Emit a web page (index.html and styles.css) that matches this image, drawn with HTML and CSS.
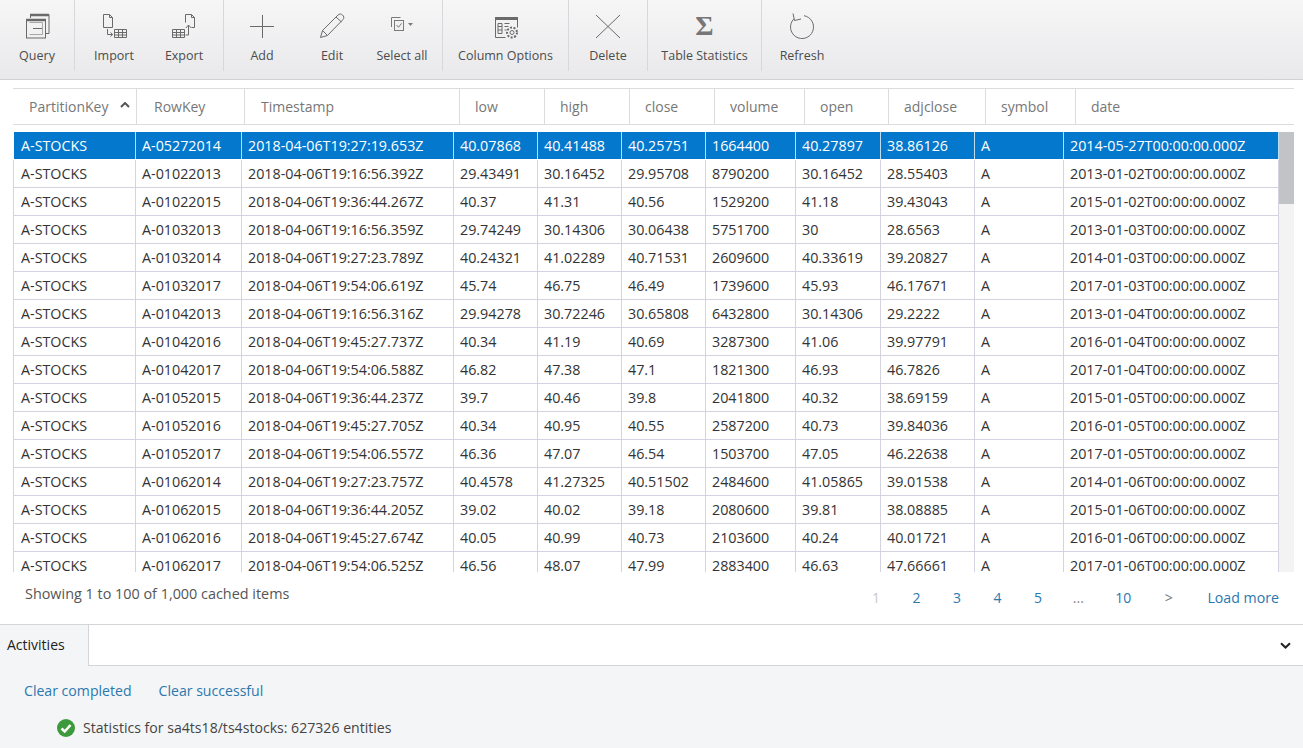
FILE: index.html
```html
<!DOCTYPE html>
<html>
<head>
<title>Table Explorer</title>
<link rel="stylesheet" href="styles.css">
</head>
<body>

<div class="toolbar">
  <div class="tool-group group-query">
    <button class="tool">
      <svg width="32" height="32" viewBox="0 0 32 32" fill="none" stroke="#6a6a6a"><path d="M9.500 8V4.500h18.500v19h-3.500"/><path d="M9 5h19" stroke-width="2.500"/><rect x="5.500" y="9.500" width="19" height="18.500"/><path d="M5 10h20" stroke-width="2.500"/><path d="M8.500 12.500h13v12h-13" stroke="#a8a8a8"/><path d="M12 18.500h9"/></svg>
      <span>Query</span>
    </button>
  </div>
  <div class="tool-group group-data">
    <button class="tool">
      <svg width="32" height="32" viewBox="0 0 32 32" fill="none" stroke="#6a6a6a"><path d="M5.500 4.500h6l3 3v10h-9z"/><path d="M11.500 4.500v3h3"/><path d="M9.500 19v5.500h5M12.500 22.500l2.200 2-2.200 2"/><path d="M16.500 19.500h12v8h-12zM16.500 22.500h12M20.500 19.500v8M24.500 19.500v8M16.500 25h12"/></svg>
      <span>Import</span>
    </button>
    <button class="tool">
      <svg width="32" height="32" viewBox="0 0 32 32" fill="none" stroke="#6a6a6a"><path d="M17.500 4.500h6l3 3v10h-3"/><path d="M17.500 4.500v8M23.500 4.500v3h3"/><path d="M20.500 25v-10M17.800 18l2.700-3 2.700 3M20.500 25h-3"/><path d="M4.500 19.500h12v8h-12zM4.500 22.500h12M8.500 19.500v8M12.500 19.500v8M4.500 25h12"/></svg>
      <span>Export</span>
    </button>
  </div>
  <div class="tool-group group-rows">
    <button class="tool">
      <svg width="32" height="32" viewBox="0 0 32 32" fill="none" stroke="#6a6a6a"><path d="M16.500 5v23M4 16.500h24"/></svg>
      <span>Add</span>
    </button>
    <button class="tool">
      <svg width="32" height="32" viewBox="0 0 32 32" fill="none" stroke="#6a6a6a"><path d="M4.500 27.500l2-7L22 5c1.500-1.300 3-1.300 4.500 0s1.800 3 .5 4.500L11.500 25.500zM6.500 20.500l5 5M20 7l5.500 5"/></svg>
      <span>Edit</span>
    </button>
    <button class="tool">
      <svg width="32" height="32" viewBox="0 0 32 32" fill="none" stroke="#7a7a7a"><path d="M5.500 17V7.500h9M8.500 19v-8"/><rect x="8.500" y="10.500" width="9" height="10"/><path d="m10.500 15 2 2.300 3-4"/><path d="M22 13h5l-2.500 3z" fill="#7a7a7a" stroke="none"/></svg>
      <span>Select all</span>
    </button>
  </div>
  <div class="tool-group group-columns">
    <button class="tool">
      <svg width="32" height="32" viewBox="0 0 32 32" fill="none" stroke="#6a6a6a"><path d="M5.500 7.500h22v10M5.500 7.500v20h10"/><path d="M5 8.500h23" stroke-width="3"/><path d="M8 13.500h4v10H8zM8 16.500h4M8 20h4M14.500 13.500h5M14.500 16.500h4M14.500 20h2"/><circle cx="22" cy="22.500" r="2"/><circle cx="22" cy="22.500" r="5" stroke-width="2" stroke-dasharray="2 1.500"/></svg>
      <span>Column Options</span>
    </button>
  </div>
  <div class="tool-group group-delete">
    <button class="tool">
      <svg width="32" height="32" viewBox="0 0 32 32" fill="none" stroke="#6a6a6a"><path d="m4 5 24 23M28 5 4 28"/></svg>
      <span>Delete</span>
    </button>
  </div>
  <div class="tool-group group-stats">
    <button class="tool">
      <span class="sigma">Σ</span>
      <span>Table Statistics</span>
    </button>
  </div>
  <div class="tool-group group-refresh">
    <button class="tool">
      <svg width="32" height="32" viewBox="0 0 32 32" fill="none" stroke="#6a6a6a"><path d="M18 5.700A11.500 11.500 0 1 1 7.800 9"/><path d="M7 3.500l1.500 7 6.500-1.500"/></svg>
      <span>Refresh</span>
    </button>
  </div>
</div>

<div class="grid-wrap">
  <div class="grid-head">
    <div class="hcell hcell-partition">PartitionKey <svg class="sort-arrow" width="10" height="6" viewBox="0 0 10 6" fill="none" stroke="#555" stroke-width="2"><path d="m1 5 4-4 4 4"/></svg></div>
    <div class="hcell hcell-rowkey">RowKey</div>
    <div class="hcell hcell-timestamp">Timestamp</div>
    <div class="hcell hcell-low">low</div>
    <div class="hcell hcell-high">high</div>
    <div class="hcell hcell-close">close</div>
    <div class="hcell hcell-volume">volume</div>
    <div class="hcell hcell-open">open</div>
    <div class="hcell hcell-adjclose">adjclose</div>
    <div class="hcell hcell-symbol">symbol</div>
    <div class="hcell hcell-date">date</div>
  </div>

  <div class="grid-body">
    <table class="grid">
      <colgroup>
        <col class="c1"><col class="c2"><col class="c3"><col class="c4"><col class="c5"><col class="c6"><col class="c7"><col class="c8"><col class="c9"><col class="c10"><col class="c11">
      </colgroup>
      <tbody>
        <tr class="selected"><td>A-STOCKS</td><td>A-05272014</td><td>2018-04-06T19:27:19.653Z</td><td>40.07868</td><td>40.41488</td><td>40.25751</td><td>1664400</td><td>40.27897</td><td>38.86126</td><td>A</td><td>2014-05-27T00:00:00.000Z</td></tr>
        <tr><td>A-STOCKS</td><td>A-01022013</td><td>2018-04-06T19:16:56.392Z</td><td>29.43491</td><td>30.16452</td><td>29.95708</td><td>8790200</td><td>30.16452</td><td>28.55403</td><td>A</td><td>2013-01-02T00:00:00.000Z</td></tr>
        <tr><td>A-STOCKS</td><td>A-01022015</td><td>2018-04-06T19:36:44.267Z</td><td>40.37</td><td>41.31</td><td>40.56</td><td>1529200</td><td>41.18</td><td>39.43043</td><td>A</td><td>2015-01-02T00:00:00.000Z</td></tr>
        <tr><td>A-STOCKS</td><td>A-01032013</td><td>2018-04-06T19:16:56.359Z</td><td>29.74249</td><td>30.14306</td><td>30.06438</td><td>5751700</td><td>30</td><td>28.6563</td><td>A</td><td>2013-01-03T00:00:00.000Z</td></tr>
        <tr><td>A-STOCKS</td><td>A-01032014</td><td>2018-04-06T19:27:23.789Z</td><td>40.24321</td><td>41.02289</td><td>40.71531</td><td>2609600</td><td>40.33619</td><td>39.20827</td><td>A</td><td>2014-01-03T00:00:00.000Z</td></tr>
        <tr><td>A-STOCKS</td><td>A-01032017</td><td>2018-04-06T19:54:06.619Z</td><td>45.74</td><td>46.75</td><td>46.49</td><td>1739600</td><td>45.93</td><td>46.17671</td><td>A</td><td>2017-01-03T00:00:00.000Z</td></tr>
        <tr><td>A-STOCKS</td><td>A-01042013</td><td>2018-04-06T19:16:56.316Z</td><td>29.94278</td><td>30.72246</td><td>30.65808</td><td>6432800</td><td>30.14306</td><td>29.2222</td><td>A</td><td>2013-01-04T00:00:00.000Z</td></tr>
        <tr><td>A-STOCKS</td><td>A-01042016</td><td>2018-04-06T19:45:27.737Z</td><td>40.34</td><td>41.19</td><td>40.69</td><td>3287300</td><td>41.06</td><td>39.97791</td><td>A</td><td>2016-01-04T00:00:00.000Z</td></tr>
        <tr><td>A-STOCKS</td><td>A-01042017</td><td>2018-04-06T19:54:06.588Z</td><td>46.82</td><td>47.38</td><td>47.1</td><td>1821300</td><td>46.93</td><td>46.7826</td><td>A</td><td>2017-01-04T00:00:00.000Z</td></tr>
        <tr><td>A-STOCKS</td><td>A-01052015</td><td>2018-04-06T19:36:44.237Z</td><td>39.7</td><td>40.46</td><td>39.8</td><td>2041800</td><td>40.32</td><td>38.69159</td><td>A</td><td>2015-01-05T00:00:00.000Z</td></tr>
        <tr><td>A-STOCKS</td><td>A-01052016</td><td>2018-04-06T19:45:27.705Z</td><td>40.34</td><td>40.95</td><td>40.55</td><td>2587200</td><td>40.73</td><td>39.84036</td><td>A</td><td>2016-01-05T00:00:00.000Z</td></tr>
        <tr><td>A-STOCKS</td><td>A-01052017</td><td>2018-04-06T19:54:06.557Z</td><td>46.36</td><td>47.07</td><td>46.54</td><td>1503700</td><td>47.05</td><td>46.22638</td><td>A</td><td>2017-01-05T00:00:00.000Z</td></tr>
        <tr><td>A-STOCKS</td><td>A-01062014</td><td>2018-04-06T19:27:23.757Z</td><td>40.4578</td><td>41.27325</td><td>40.51502</td><td>2484600</td><td>41.05865</td><td>39.01538</td><td>A</td><td>2014-01-06T00:00:00.000Z</td></tr>
        <tr><td>A-STOCKS</td><td>A-01062015</td><td>2018-04-06T19:36:44.205Z</td><td>39.02</td><td>40.02</td><td>39.18</td><td>2080600</td><td>39.81</td><td>38.08885</td><td>A</td><td>2015-01-06T00:00:00.000Z</td></tr>
        <tr><td>A-STOCKS</td><td>A-01062016</td><td>2018-04-06T19:45:27.674Z</td><td>40.05</td><td>40.99</td><td>40.73</td><td>2103600</td><td>40.24</td><td>40.01721</td><td>A</td><td>2016-01-06T00:00:00.000Z</td></tr>
        <tr><td>A-STOCKS</td><td>A-01062017</td><td>2018-04-06T19:54:06.525Z</td><td>46.56</td><td>48.07</td><td>47.99</td><td>2883400</td><td>46.63</td><td>47.66661</td><td>A</td><td>2017-01-06T00:00:00.000Z</td></tr>
      </tbody>
    </table>
    <div class="scrollbar"><div class="scroll-thumb"></div></div>
  </div>

  <div class="grid-foot">
    <div class="showing">Showing 1 to 100 of 1,000 cached items</div>
    <div class="pager">
      <a class="page page-off">1</a>
      <a class="page">2</a>
      <a class="page">3</a>
      <a class="page">4</a>
      <a class="page">5</a>
      <a class="page page-gap">...</a>
      <a class="page page-ten">10</a>
      <a class="page page-next">&gt;</a>
      <a class="page page-more">Load more</a>
    </div>
  </div>
</div>

<div class="activities">
  <div class="activities-head">
    <div class="activities-tab">Activities</div>
    <svg class="collapse" width="11" height="7" viewBox="0 0 11 7" fill="none" stroke="#222" stroke-width="2"><path d="m1 1.200 4.500 4.300L10 1.200"/></svg>
  </div>
  <div class="activities-body">
    <div class="clear-links"><a>Clear completed</a><a>Clear successful</a></div>
    <div class="activity">
      <svg width="18" height="18" viewBox="0 0 18 18"><circle cx="9" cy="9" r="9" fill="#3c9a3c"/><path d="m4.500 9.500 3.200 3 5.800-6.500" fill="none" stroke="#fff" stroke-width="2.600"/></svg>
      <span>Statistics for sa4ts18/ts4stocks: 627326 entities</span>
    </div>
  </div>
</div>

</body>
</html>
```

FILE: styles.css
```css
html, body {
  height: 100%;
}

body {
  margin: 0;
  overflow: hidden;
  background-color: #fff;
  color: #333;
  font-family: "Open Sans", "Noto Sans", sans-serif;
  font-size: 13px;
  display: flex;
  flex-direction: column;
}

/* Toolbar */
.toolbar {
  height: 79px;
  display: flex;
  background: linear-gradient(#f6f6f7, #e9e9eb);
  border-bottom: 1px solid #d2d2d4;
}

.tool-group {
  display: flex;
  height: 71px;
  border-right: 1px solid #d8d8da;
  box-sizing: border-box;
}

.group-query { width: 75px; }
.group-data { width: 149px; padding-left: 4px; }
.group-rows { width: 219px; padding-left: 3px; }
.group-columns { width: 126px; }
.group-delete { width: 79px; }
.group-stats { width: 114px; }
.group-refresh { width: 80px; border-right: none; }

.tool {
  flex: 1;
  border: none;
  background: none;
  padding: 10px 0 0;
  font: inherit;
  font-size: 12.500px;
  color: #4c4c4c;
  display: flex;
  flex-direction: column;
  align-items: center;
  gap: 5px;
  white-space: nowrap;
}

.group-data .tool, .group-rows .tool {
  flex: none;
  width: 70px;
}

.sigma {
  height: 32px;
  line-height: 32px;
  font-family: "Liberation Serif", serif;
  font-size: 28px;
  font-weight: bold;
  color: #777;
}

/* Grid */
.grid-wrap {
  height: 545px;
  padding: 8px 9px 0 13px;
  box-sizing: border-box;
  border-bottom: 1px solid #d5d5d8;
}

.grid-head {
  display: flex;
  height: 37px;
  border-top: 1px solid #dcdcdc;
  border-bottom: 1px solid #dcdcdc;
  box-sizing: border-box;
}

.hcell {
  box-sizing: border-box;
  padding-left: 16px;
  line-height: 35px;
  font-size: 14px;
  color: #777;
  border-right: 1px solid #dcdcdc;
  white-space: nowrap;
}

.hcell-partition { width: 124px; position: relative; }
.hcell-rowkey { width: 108px; padding-left: 17px; }
.hcell-timestamp { width: 215px; padding-right: 1px; }
.hcell-low { width: 85px; }
.hcell-high { width: 85px; }
.hcell-close { width: 85px; }
.hcell-volume { width: 90px; }
.hcell-open { width: 84px; }
.hcell-adjclose { width: 97px; }
.hcell-symbol { width: 90px; }
.hcell-date { flex: 1; border-right: none; }

.hcell-low, .hcell-high, .hcell-close, .hcell-volume, .hcell-open, .hcell-adjclose, .hcell-symbol, .hcell-date {
  padding-left: 15px;
}

.sort-arrow {
  position: absolute;
  right: 6px;
  top: 13px;
}

.grid-body {
  display: flex;
  height: 440px;
  margin-top: 7px;
  overflow: hidden;
}

.grid {
  width: 1266px;
  flex: none;
  align-self: flex-start;
  border-collapse: collapse;
  table-layout: fixed;
  font-size: 14.300px;
}

.c1 { width: 122px; }
.c2 { width: 106px; }
.c3 { width: 212px; }
.c4, .c5, .c6 { width: 84px; }
.c7 { width: 90px; }
.c8 { width: 85px; }
.c9 { width: 94px; }
.c10 { width: 89px; }

.grid td {
  height: 28px;
  box-sizing: border-box;
  padding: 0 0 0 6px;
  border: 1px solid #d3d3e2;
  border-top: none;
  white-space: nowrap;
  overflow: hidden;
  color: #333;
}

.grid td:first-child {
  padding-left: 7px;
}

.grid tr.selected td {
  height: 27px;
  background-color: #0478cc;
  color: #fff;
  border-color: #fff;
  border-right-color: #c0dcf0;
  font-weight: 500;
}

.scrollbar {
  width: 15px;
  flex: none;
  background-color: #f3f3f4;
}

.scroll-thumb {
  height: 72px;
  background-color: #c2c3c7;
}

.grid-foot {
  display: flex;
  justify-content: space-between;
  height: 53px;
}

.showing {
  padding: 12px 0 0 12px;
  font-size: 14.400px;
  color: #555;
}

.pager {
  display: flex;
  padding: 16px 15px 0 0;
  font-size: 14px;
  color: #2b78ae;
}

.page { width: 40.500px; text-align: center; }
.page-off { color: #c8c8c8; }
.page-gap { color: #888; width: 40px; }
.page-ten { width: 50px; }
.page-next { width: 41px; color: #777; }
.page-more { width: auto; margin-left: 18px; font-size: 14.200px; }

/* Activities */
.activities {
  flex: 1;
  display: flex;
  flex-direction: column;
}

.activities-head {
  height: 41px;
  display: flex;
  justify-content: space-between;
  align-items: center;
  box-sizing: border-box;
  border-bottom: 1px solid #d5d5d8;
  padding-right: 12px;
}

.activities-tab {
  width: 89px;
  height: 41px;
  box-sizing: border-box;
  padding-left: 7px;
  line-height: 40px;
  font-size: 14px;
  font-weight: 500;
  color: #222;
  background-color: #f4f5f6;
  border-right: 1px solid #d5d5d8;
}

.activities-body {
  flex: 1;
  background-color: #f4f5f6;
  padding: 15px 0 0 24px;
  font-size: 14.100px;
}

.clear-links {
  display: flex;
  gap: 27px;
  color: #2b78ae;
}

.activity {
  display: flex;
  align-items: center;
  gap: 8px;
  margin: 18px 0 0 33px;
  color: #444;
}
```
